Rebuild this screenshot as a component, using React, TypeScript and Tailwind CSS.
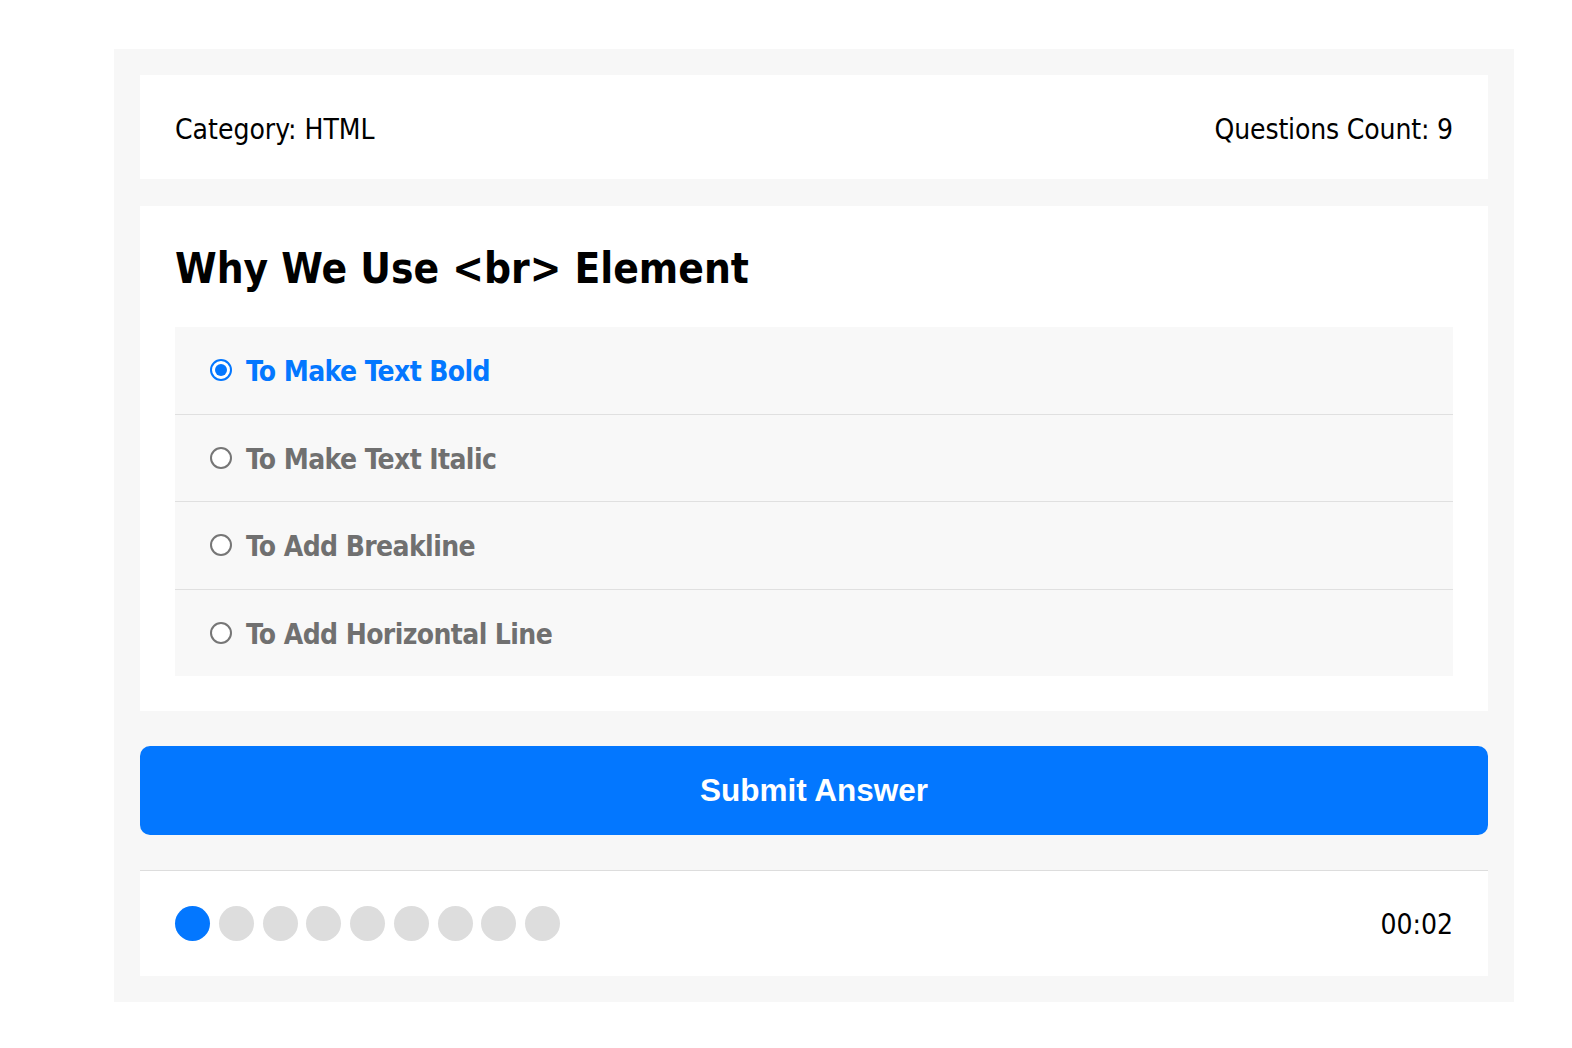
import React from "react";

const options = [
  "To Make Text Bold",
  "To Make Text Italic",
  "To Add Breakline",
  "To Add Horizontal Line",
];

function Radio({ checked }: { checked: boolean }) {
  if (checked) {
    return (
      <span className="flex h-[22px] w-[22px] shrink-0 items-center justify-center rounded-full border-2 border-[#0377ff] bg-white">
        <span className="h-[12px] w-[12px] rounded-full bg-[#0377ff]" />
      </span>
    );
  }
  return <span className="h-[22px] w-[22px] shrink-0 rounded-full border-2 border-[#767676] bg-white" />;
}

export default function App() {
  const font = "font-['DejaVu_Sans_Condensed','DejaVu_Sans',sans-serif]";
  return (
    <div className="min-h-[1048px] bg-white pt-[49px]">
      <div className={`ml-[114px] flex w-[1400px] flex-col bg-[#f7f7f7] p-[26px] ${font}`}>
        <div className="flex h-[104px] items-center justify-between bg-white px-[35px] text-[28px] text-black">
          <span className="pt-[6px]">Category: HTML</span>
          <span className="pt-[6px] tracking-[-0.15px]">Questions Count: 9</span>
        </div>

        <div className="mt-[27px] bg-white px-[35px] pt-[35px] pb-[35px]">
          <h2 className="h-[53px] pt-[3px] text-[42px] leading-[50px] font-bold text-black">Why We Use &lt;br&gt; Element</h2>
          <ul className="mt-[33px] bg-[#f8f8f8]">
            {options.map((o, i) => (
              <li
                key={o}
                className={`flex h-[86.5px] items-center gap-[14px] pl-[35px] ${i < options.length - 1 ? "box-content border-b border-[#e0e0e0]" : ""}`}
              >
                <Radio checked={i === 0} />
                <span className={`pt-[4px] text-[28px] font-bold tracking-[-0.6px] ${i === 0 ? "text-[#0377ff]" : "text-[#707070]"}`}>{o}</span>
              </li>
            ))}
          </ul>
        </div>

        <button className="mt-[35px] h-[89px] w-full rounded-[10px] bg-[#0377ff] font-['Liberation_Sans',Arial,sans-serif] text-[31.5px] font-bold text-white">
          Submit Answer
        </button>

        <div className="mt-[35px] flex h-[106px] items-center justify-between border-t border-[#dddddd] bg-white px-[35px]">
          <div className="flex gap-[8.75px]">
            {Array.from({ length: 9 }).map((_, i) => (
              <span
                key={i}
                className={`h-[35px] w-[35px] rounded-full ${i === 0 ? "bg-[#0377ff]" : "bg-[#dddddd]"}`}
              />
            ))}
          </div>
          <span className="pt-[2px] text-[28px] text-black">00:02</span>
        </div>
      </div>
    </div>
  );
}
